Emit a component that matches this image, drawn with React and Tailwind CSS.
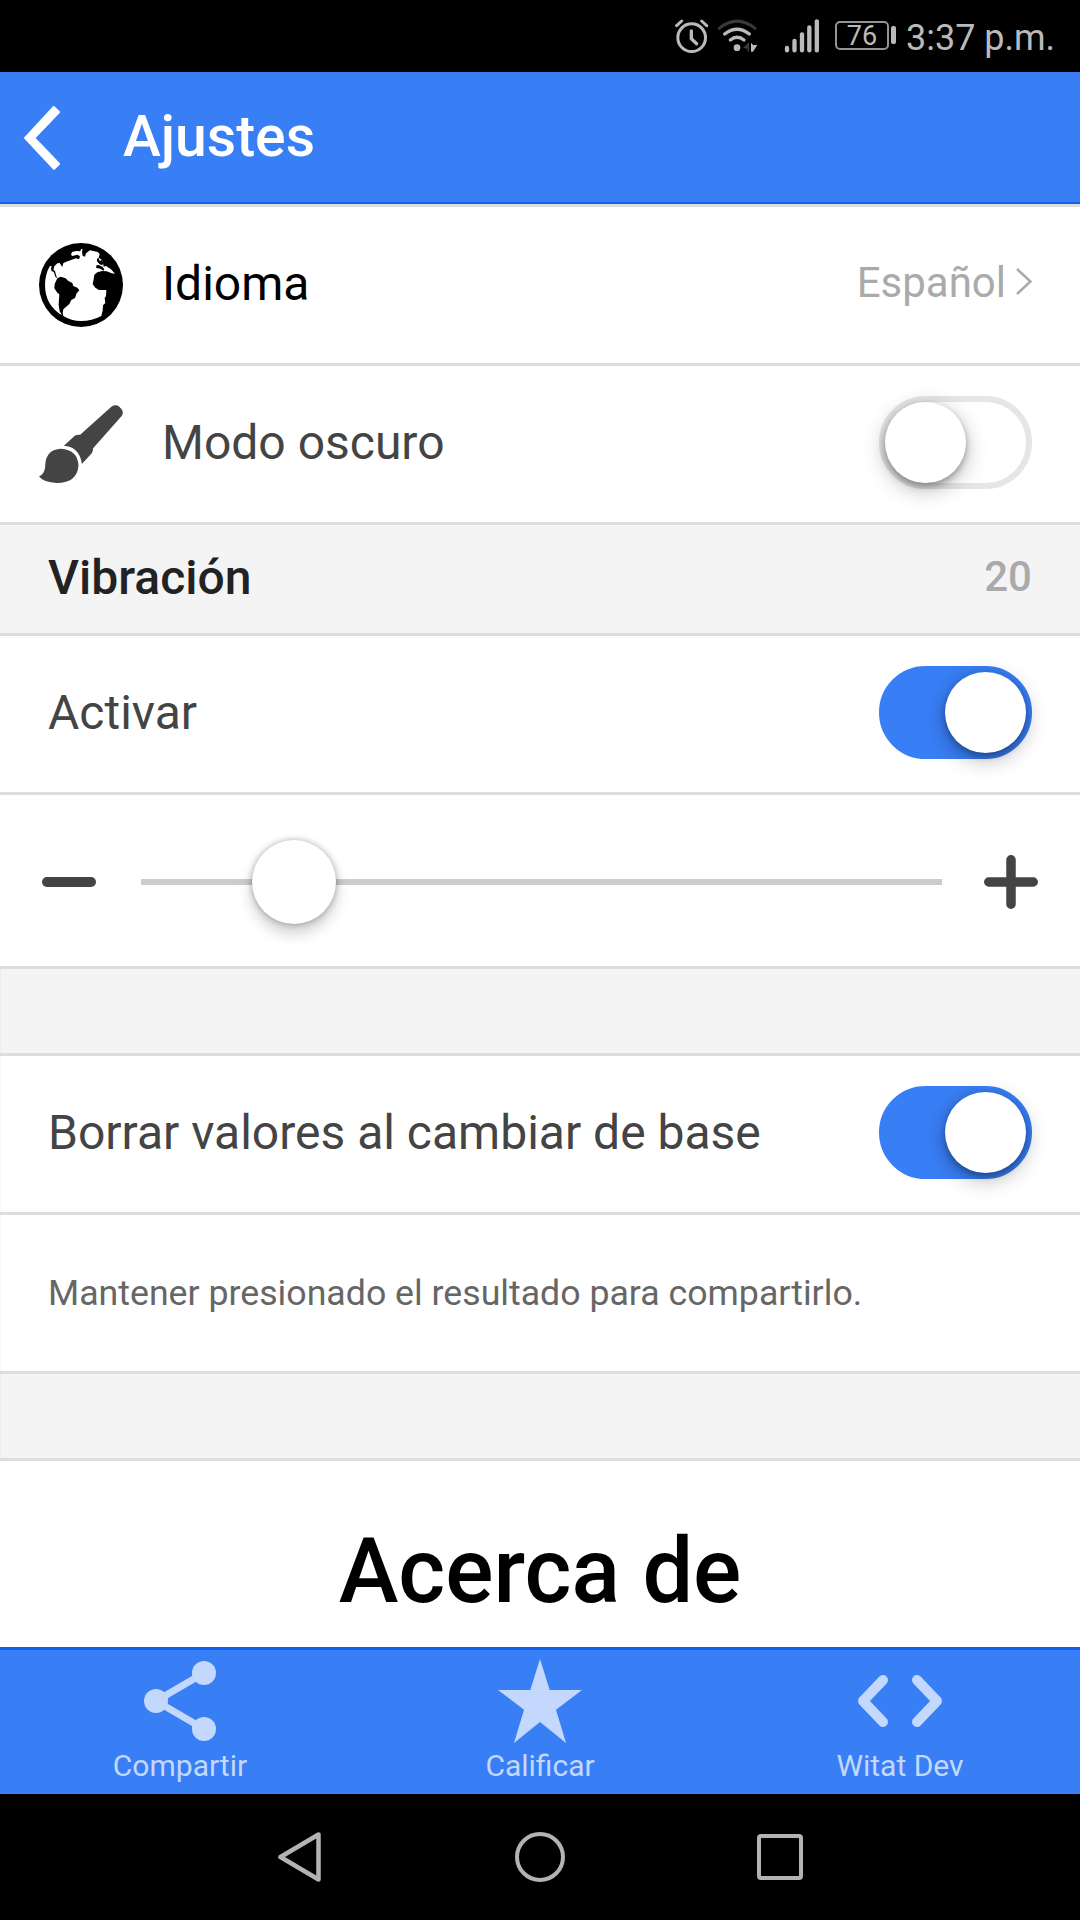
import React from "react";

function Alarm() {
  return (
    <svg className="h-[34px] w-[34px]" viewBox="44 58 102 102" fill="none" stroke="#bababa" strokeLinecap="round" strokeLinejoin="round">
      <circle cx="94" cy="114" r="41.5" strokeWidth="9" />
      <path d="M93 94v23l16 15" strokeWidth="10" />
      <path d="M49 78l15-14M139 78l-15-14" strokeWidth="9" />
    </svg>
  );
}

function Wifi() {
  return (
    <svg className="ml-[8px] h-[34px] w-[42px]" viewBox="171 58 126 102" fill="none" strokeLinecap="round">
      <path d="M178 86Q231 43 285 86" stroke="#3a3a3a" strokeWidth="9" />
      <path d="M194 103Q231 74 268 103" stroke="#bababa" strokeWidth="10" />
      <path d="M211 121Q231 104 252 121" stroke="#bababa" strokeWidth="10" />
      <circle cx="231" cy="144" r="10" fill="#bababa" />
      <path d="M249 144L267 128V156H263V148Z" fill="#3a3a3a" />
      <path d="M273 129L279 136H292L279 156H273Z" fill="#bababa" />
    </svg>
  );
}

function Signal() {
  return (
    <svg className="ml-[25px] h-[34px] w-[36px]" viewBox="372 56 108 102" fill="none" stroke="#bababa" strokeWidth="13" strokeLinecap="round">
      <path d="M381 143v7M403.500 122v28M426 102v48M448 81v69M470.500 63v87" />
    </svg>
  );
}

function StatusBar() {
  return (
    <div className="flex h-[72px] items-center bg-black pl-[675px] text-[#bababa]">
      <Alarm />
      <Wifi />
      <Signal />
      <div className="mb-[2px] ml-[15px] flex h-[29px] w-[54px] items-center justify-center rounded-[5px] border-2 border-[#949494] text-[27px] leading-none">
        <span className="pt-[2px]">76</span>
      </div>
      <div className="mb-[2px] ml-[2px] h-[18px] w-[5px] rounded-[2px] bg-[#bababa]" />
      <span className="ml-[10px] pt-[4px] text-[36px] leading-none whitespace-nowrap">3:37 p.m.</span>
    </div>
  );
}

function Earth() {
  return (
    <svg className="mt-[3px] h-[84px] w-[84px]" viewBox="117 519 252 252">
      <circle cx="243" cy="645" r="126" fill="#000" />
      <path
        fill="#fff"
        d="M149 589L155 587L153 597L155 604L161 605L166 620L172 625L168 616L165 603L160 599L163 589L172 580L179 579L187 591L190 579L207 572L228 565L237 568L240 559L232 554L217 558L213 554L216 546L229 543L241 544L243 537L248 538L246 546L248 557L255 560L258 550L270 541L293 546L299 552L296 563L305 569L309 579L311 590L318 588L333 598L345 611L335 610L320 604L306 603L292 607L283 614L281 628L278 643L286 653L297 660L319 660L318 679L314 684L316 699L309 706L308 722L304 738Q276 753 243 753Q214 753 190 738L188 729L190 718L208 702L214 690L225 684L230 670L238 661L232 653L220 648L217 639L204 632L197 625L182 620L172 625L164 642L163 655L172 668L178 673L176 704L179 724L186 736Q135 705 135 645Q135 615 149 589Z"
      />
      <path fill="#000" d="M291 566l5-2 3 9 6-3 5 8-3 8-8-3-8-9ZM290 585l8 1 9 4 6 8-3 4-9-6-13-3Z" />
    </svg>
  );
}

function Brush() {
  return (
    <svg className="mt-[3px] h-[78px] w-[84px]" viewBox="117 164 253 235" fill="#444">
      <path d="M192 287L223 258Q229 253 241 254L335 169Q348 160 359 169L366 177Q373 187 366 197L280 294Q280 304 276 309L246 342Q244 316 227 300Q212 288 192 287Z" />
      <path d="M117 379Q137 371 136 342Q139 299 183 296Q233 299 236 346Q232 398 171 399Q130 398 117 379Z" />
    </svg>
  );
}

function Toggle({ on }) {
  return (
    <div
      className={
        on
          ? "flex h-[93px] w-[153px] justify-end rounded-full border-[6px] border-[#387ef5] bg-[#387ef5]"
          : "flex h-[93px] w-[153px] justify-start rounded-full border-[6px] border-[#e6e6e6] bg-white"
      }
    >
      <div className="h-[81px] w-[81px] rounded-full bg-white shadow-[0_6px_21px_rgba(0,0,0,0.3),0_3px_6px_rgba(0,0,0,0.28)]" />
    </div>
  );
}

function Row({ className = "", children }) {
  return <div className={"flex items-center border-b-[3px] border-[#ddd] " + className}>{children}</div>;
}

function Tab({ label, children }) {
  return (
    <div className="flex w-[360px] flex-col items-center text-[#c3d8fc]">
      <div className="flex h-[102px] items-center justify-center">{children}</div>
      <span className="-mt-px text-[30px] leading-[30px]">{label}</span>
    </div>
  );
}

export default function App() {
  return (
    <div className="flex h-[1920px] w-[1080px] flex-col overflow-hidden bg-white font-['Roboto',sans-serif] text-[#444]">
      <StatusBar />
      <header className="flex h-[132px] items-center border-b-2 border-[#0c60ee] bg-[#387ef5] text-white">
        <svg className="mt-[2px] ml-[23px] h-[64px] w-[38px]" viewBox="70 108 114 192" fill="#fff">
          <path d="M160 109Q163 107 166 110L180 124Q182 126 180 129L108 204L180 279Q182 282 180 284L166 298Q163 301 160 298L72 204Z" />
        </svg>
        <h1 className="mb-[2px] ml-[62px] text-[57px] leading-none font-medium">Ajustes</h1>
      </header>
      <main className="flex h-[1443px] flex-col overflow-hidden border-t-[3px] border-[#ddd] text-[48px] leading-none">
        <Row className="h-[159px] pr-[48px] pb-[3px] pl-[39px] text-black">
          <Earth />
          <span className="ml-[39px] flex-1">Idioma</span>
          <span className="pb-[2px] text-[42px] text-[#aaa]">Español</span>
          <svg className="mb-[5px] ml-[10px] h-[27px] w-[16px]" viewBox="0 0 16 27" fill="none" stroke="#aaa" strokeWidth="2.500">
            <path d="M1 1L14.500 13.500L1 26" />
          </svg>
        </Row>
        <Row className="h-[159px] pr-[48px] pb-[3px] pl-[39px]">
          <Brush />
          <span className="ml-[39px] flex-1">Modo oscuro</span>
          <Toggle on={false} />
        </Row>
        <Row className="h-[111px] justify-between bg-[#f4f4f4] px-[48px] pb-[2px] font-medium text-[#222]">
          <span>Vibración</span>
          <span className="pb-[2px] text-[42px] text-[#aaa]">20</span>
        </Row>
        <Row className="h-[159px] justify-between px-[48px] pb-[3px]">
          <span>Activar</span>
          <Toggle on />
        </Row>
        <Row className="h-[174px] px-[42px] pt-[3px]">
          <div className="h-[10px] w-[54px] rounded-full bg-[#444]" />
          <div className="mr-[42px] ml-[45px] flex h-[6px] flex-1 items-center bg-[#ccc] pl-[111px]">
            <div className="h-[84px] w-[84px] shrink-0 rounded-full bg-white shadow-[0_0_6px_rgba(0,0,0,0.3),0_9px_15px_rgba(0,0,0,0.2)]" />
          </div>
          <svg className="h-[54px] w-[54px]" viewBox="0 0 54 54" stroke="#444" strokeWidth="9.500" strokeLinecap="round">
            <path d="M27 4.750V49.250M4.750 27H49.250" />
          </svg>
        </Row>
        <Row className="h-[87px] bg-[#f4f4f4] shadow-[inset_1px_0_0_rgba(0,0,0,0.03)]" />
        <Row className="h-[159px] justify-between px-[48px] pb-[3px] shadow-[inset_1px_0_0_rgba(0,0,0,0.03)]">
          <span>Borrar valores al cambiar de base</span>
          <Toggle on />
        </Row>
        <Row className="h-[159px] px-[48px] pt-[2px] text-[35.7px] text-[#666] shadow-[inset_1px_0_0_rgba(0,0,0,0.03)]">
          <span>Mantener presionado el resultado para compartirlo.</span>
        </Row>
        <Row className="h-[87px] bg-[#f4f4f4] shadow-[inset_1px_0_0_rgba(0,0,0,0.03)]" />
        <h2 className="pt-[63px] text-center text-[90px] leading-[96px] font-medium text-black">Acerca de</h2>
      </main>
      <nav className="flex h-[147px] border-t-[3px] border-[#0c60ee] bg-[#387ef5]">
        <Tab label="Compartir">
          <svg className="h-[80px] w-[72px]" viewBox="0 0 72 80" fill="currentColor" stroke="currentColor">
            <circle cx="12" cy="40" r="12" stroke="none" />
            <circle cx="60" cy="12" r="12" stroke="none" />
            <circle cx="60" cy="68" r="12" stroke="none" />
            <path d="M60 12L12 40L60 68" fill="none" strokeWidth="7" />
          </svg>
        </Tab>
        <Tab label="Calificar">
          <svg className="h-[84px] w-[84px]" viewBox="0 0 84 84" fill="currentColor">
            <path d="M42 0L51.700 31H84L58 50.700L68 84L42 63L16 84L26 50.700L0 31H32.300Z" />
          </svg>
        </Tab>
        <Tab label="Witat Dev">
          <svg className="h-[52px] w-[84px]" viewBox="0 0 84 52" fill="none" stroke="currentColor" strokeWidth="10" strokeLinecap="round" strokeLinejoin="round">
            <path d="M25 5L5 26L25 47M59 5L79 26L59 47" />
          </svg>
        </Tab>
      </nav>
      <footer className="flex h-[126px] items-center bg-black">
        <svg className="ml-[278px] h-[50px] w-[44px]" viewBox="0 0 44 50" fill="none" stroke="#b3b3b3" strokeWidth="4.500" strokeLinejoin="round">
          <path d="M2.500 25L40.500 2.500V47.500Z" />
        </svg>
        <div className="ml-[193px] h-[50px] w-[50px] rounded-full border-4 border-[#b3b3b3]" />
        <div className="ml-[192px] h-[46px] w-[46px] rounded-[4px] border-4 border-[#b3b3b3]" />
      </footer>
    </div>
  );
}
